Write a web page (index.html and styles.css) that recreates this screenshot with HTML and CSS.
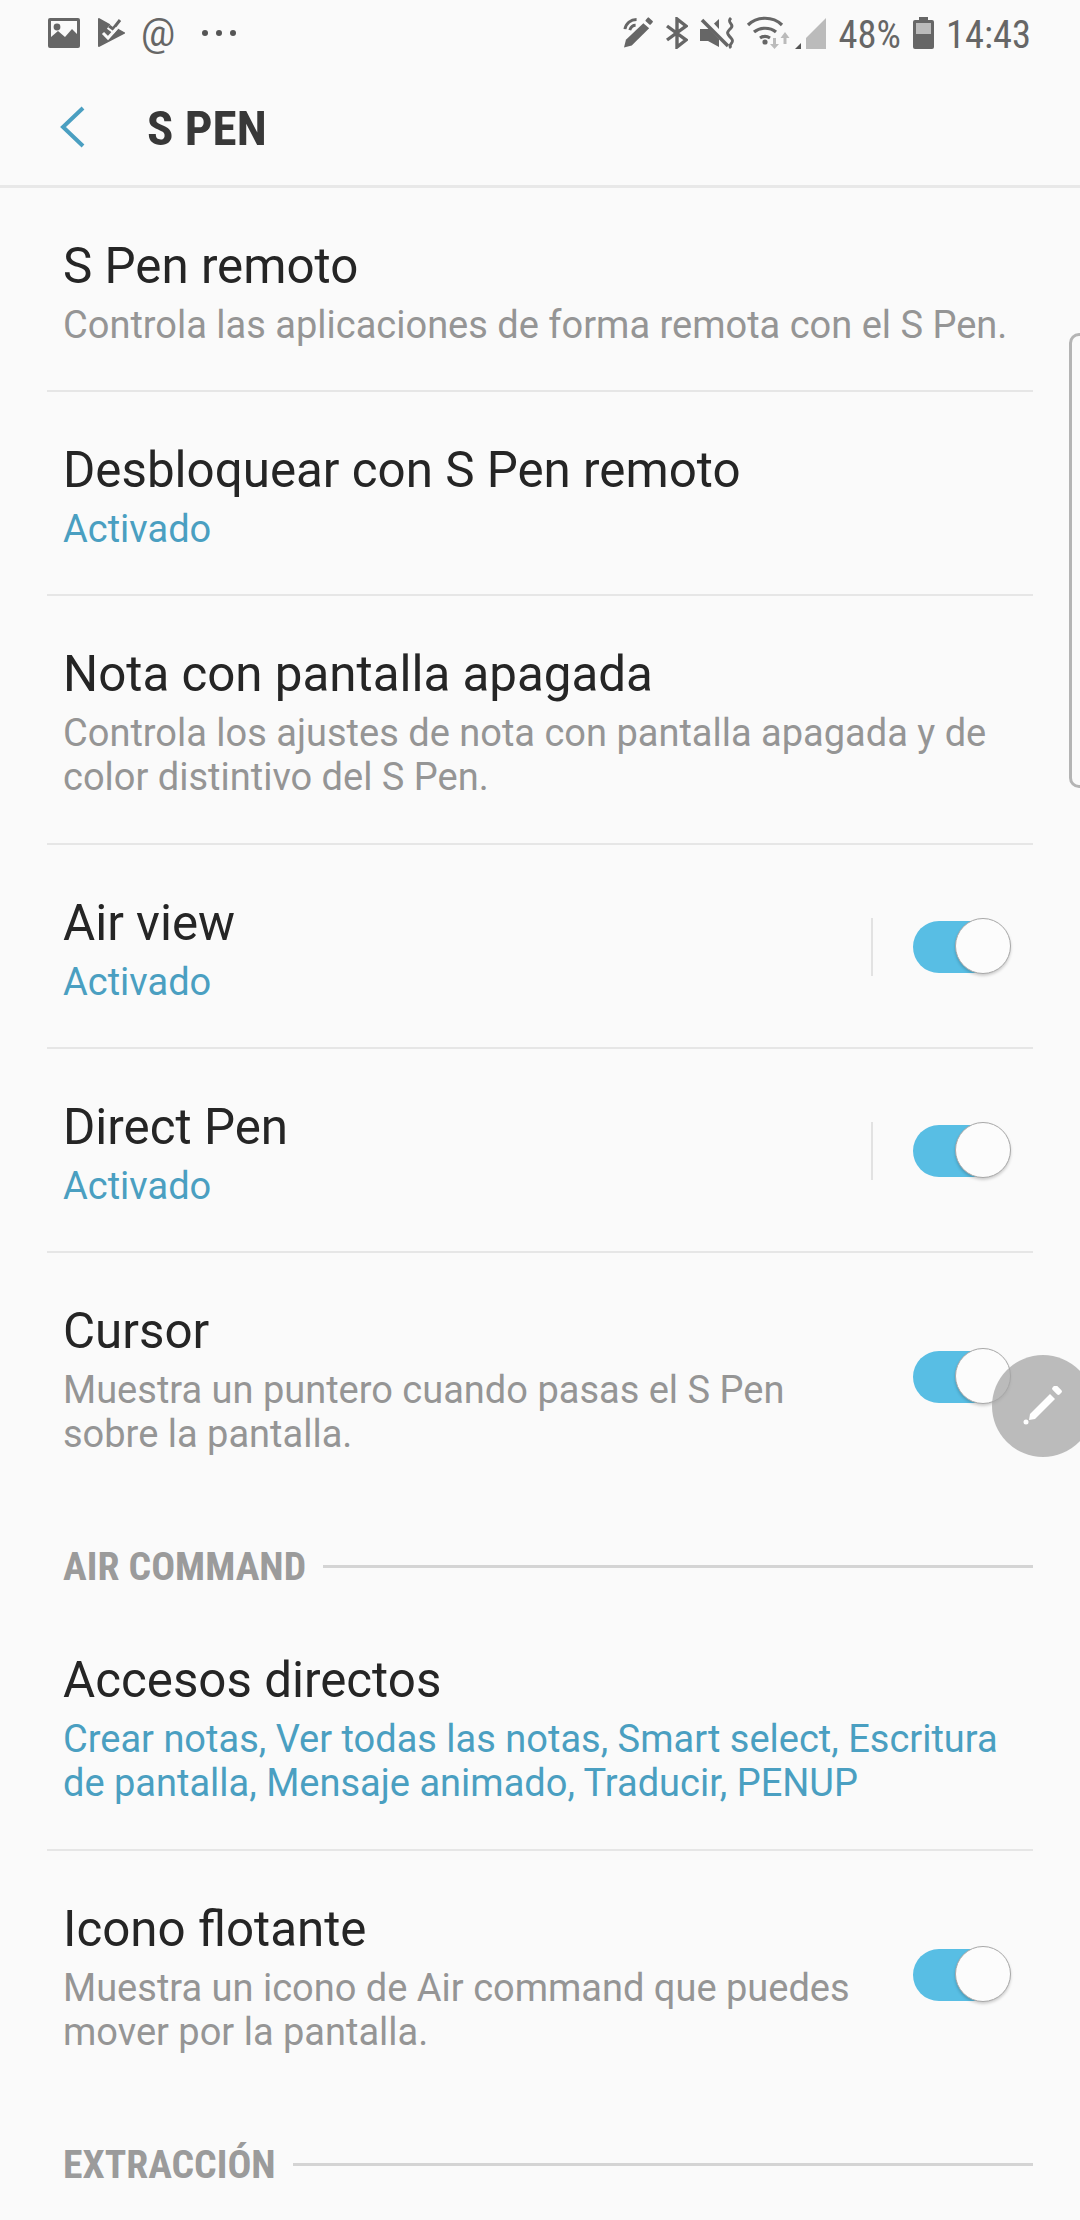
FILE: index.html
```html
<!DOCTYPE html>
<html lang="es">

<head>
  <meta charset="UTF-8" />
  <meta name="viewport" content="width=device-width, initial-scale=1.0" />
  <title>S Pen</title>
  <link rel="stylesheet" href="styles.css">
</head>

<body>
  <div class="statusbar">
    <div class="status-left">
      <svg class="ic-gallery" width="32" height="30" viewBox="0 0 32 30">
        <path fill="#666" fill-rule="evenodd" d="M2 0h28a2 2 0 0 1 2 2v26a2 2 0 0 1-2 2H2a2 2 0 0 1-2-2V2a2 2 0 0 1 2-2zM3 3v16l7-6 7 6 7-8 5 5V3z" />
        <circle cx="9" cy="9" r="3.4" fill="#666" />
      </svg>
      <svg class="ic-check" width="28" height="30" viewBox="0 0 28 30">
        <path fill="#666" d="M0 1a1 1 0 0 1 1-1l25 14a1 1 0 0 1 0 2L1 29a1 1 0 0 1-1-1z" />
        <path fill="none" stroke="#fafafa" stroke-width="7" d="M11 8l4 3 7-9" />
        <path fill="none" stroke="#666" stroke-width="3" d="M11 8l4 3 7-9" />
        <path fill="none" stroke="#fafafa" stroke-width="3" d="M5 15l5 5 9-10" />
      </svg>
      <span class="ic-at">@</span>
      <svg class="ic-dots" width="34" height="8" viewBox="0 0 34 8">
        <circle cx="3" cy="4" r="3" fill="#555" />
        <circle cx="17" cy="4" r="3" fill="#555" />
        <circle cx="31" cy="4" r="3" fill="#555" />
      </svg>
    </div>
    <div class="status-right">
      <svg width="31" height="32" viewBox="0 0 32 32">
        <path fill="#666" d="M1 31l2-8L21 6l6 5L9 29z" />
        <rect x="24" y="1" width="7" height="5" rx="1" transform="rotate(42 27 3)" fill="#666" />
        <path fill="none" stroke="#666" stroke-width="3" d="M2 12C3 6 8 2 14 2M7 13c1-3 3-5 6-5" />
      </svg>
      <svg width="22" height="32" viewBox="0 0 22 32">
        <path fill="none" stroke="#666" stroke-width="3.4" d="M1 9l19 14-9 7V2l9 7L1 23" />
      </svg>
      <svg width="34" height="32" viewBox="0 0 34 32">
        <path fill="#666" d="M0 12h8L19 2v28L8 24H0z" />
        <path stroke="#fafafa" stroke-width="7" d="M5 2l24 26" />
        <path stroke="#666" stroke-width="3.6" d="M2 3l26 26" />
        <path fill="none" stroke="#666" stroke-width="3" d="M31 1c-5 5 4 6 0 10s-5 5 0 10-4 6 0 10" />
      </svg>
      <svg class="ic-wifi" width="36" height="32" viewBox="0 0 36 32">
        <path fill="none" stroke="#666" stroke-width="3.2" d="M1 8C10-1 26-1 35 8M7 15c6-5 16-5 22 0M13 21c3-2 7-2 10 0" />
        <circle cx="18" cy="25" r="2.600" fill="#666" />
        <path fill="#bbb" d="M26 21h3v6h3l-4.500 5-4.500-5h3zM38 15l4.500 6h-3v6h-3v-6h-3z" />
      </svg>
      <svg width="31" height="32" viewBox="0 0 31 32">
        <path fill="#bbb" d="M11 21L31 1v31H11z" />
        <path fill="#555" d="M0 32l6-6v6z" />
      </svg>
      <span class="status-text pct">48%</span>
      <svg width="21" height="32" viewBox="0 0 21 32">
        <rect x="6" y="0" width="9" height="4" fill="#666" />
        <rect x="0" y="3" width="21" height="29" rx="2" fill="#666" />
        <rect x="3" y="6" width="15" height="11" fill="#bbb" />
      </svg>
      <span class="status-text">14:43</span>
    </div>
  </div>

  <header class="appbar">
    <svg class="back" width="26" height="42" viewBox="0 0 26 42">
      <path fill="none" stroke="#4a9fc1" stroke-width="4" d="M24 2L4 21l20 19" />
    </svg>
    <h1>S PEN</h1>
  </header>

  <main>
    <div class="row">
      <div class="row-text">
        <div class="title">S Pen remoto</div>
        <div class="sub">Controla las aplicaciones de forma remota con el S Pen.</div>
      </div>
    </div>
    <div class="row">
      <div class="row-text">
        <div class="title">Desbloquear con S Pen remoto</div>
        <div class="sub on">Activado</div>
      </div>
    </div>
    <div class="row two">
      <div class="row-text">
        <div class="title">Nota con pantalla apagada</div>
        <div class="sub">Controla los ajustes de nota con pantalla apagada y de<br>color distintivo del S Pen.</div>
      </div>
    </div>
    <div class="row">
      <div class="row-text">
        <div class="title">Air view</div>
        <div class="sub on">Activado</div>
      </div>
      <div class="vline"></div>
      <div class="toggle"></div>
    </div>
    <div class="row">
      <div class="row-text">
        <div class="title">Direct Pen</div>
        <div class="sub on">Activado</div>
      </div>
      <div class="vline"></div>
      <div class="toggle"></div>
    </div>
    <div class="row two last">
      <div class="row-text">
        <div class="title">Cursor</div>
        <div class="sub">Muestra un puntero cuando pasas el S Pen<br>sobre la pantalla.</div>
      </div>
      <div class="toggle"></div>
    </div>

    <div class="section">
      <span>AIR COMMAND</span>
      <div class="section-line"></div>
    </div>

    <div class="row two">
      <div class="row-text">
        <div class="title">Accesos directos</div>
        <div class="sub on">Crear notas, Ver todas las notas, Smart select, Escritura<br>de pantalla, Mensaje animado, Traducir, PENUP</div>
      </div>
    </div>
    <div class="row two last">
      <div class="row-text">
        <div class="title">Icono flotante</div>
        <div class="sub">Muestra un icono de Air command que puedes<br>mover por la pantalla.</div>
      </div>
      <div class="toggle"></div>
    </div>

    <div class="section">
      <span>EXTRACCIÓN</span>
      <div class="section-line"></div>
    </div>
  </main>

  <div class="edge-handle"></div>
  <div class="float-btn">
    <svg width="40" height="40" viewBox="0 0 40 40">
      <path fill="#fff" d="M7 28L27 8l5 5-20 20-6 1z" />
      <rect x="29" y="1" width="10" height="6" rx="2" transform="rotate(45 34 4)" fill="#fff" />
      <circle cx="3" cy="36" r="2.500" fill="#fff" />
    </svg>
  </div>
</body>

</html>
```

FILE: styles.css
```css
html,
body {
  margin: 0;
  padding: 0;
}

body {
  width: 1080px;
  height: 2220px;
  overflow: hidden;
  position: relative;
  background-color: #fafafa;
  font-family: Roboto, sans-serif;
  color: #252525;
}

/* status bar */
.statusbar {
  height: 66px;
  display: flex;
  justify-content: space-between;
  align-items: center;
  padding: 0 53px 0 48px;
}

.status-left,
.status-right {
  display: flex;
  align-items: center;
}

.ic-check {
  margin-left: 18px;
}

.ic-at {
  margin-left: 15px;
  width: 38px;
  font-size: 38px;
  line-height: 40px;
  color: #666;
}

.ic-dots {
  margin-left: 23px;
}

.status-right svg {
  margin-right: 12.4px;
}

.status-right .ic-wifi {
  overflow: visible;
}

.status-text {
  display: inline-block;
  margin-top: 3px;
  font-size: 38.500px;
  line-height: 40px;
  font-stretch: 75%;
  color: #666;
  width: 81px;
}

.status-text.pct {
  width: 74px;
}

/* app bar */
.appbar {
  height: 122px;
  box-sizing: border-box;
  border-bottom: 3px solid #e8e8e8;
  display: flex;
  align-items: center;
  padding-left: 59px;
  padding-top: 6px;
}

.back {
  margin-top: -3px;
}

.appbar h1 {
  margin: 0 0 0 62px;
  font-size: 49px;
  font-weight: 700;
  font-stretch: 75%;
  color: #383838;
}

/* rows */
.row {
  margin: 0 47px;
  padding: 52px 17px 43px 16px;
  display: flex;
  align-items: center;
  border-bottom: 2px solid #e6e6e6;
  box-sizing: border-box;
}

.row.two {
  padding-bottom: 44px;
}

.row.last {
  border-bottom: 2px solid transparent;
}

.row-text {
  flex: 1;
}

.title {
  font-size: 49.300px;
  line-height: 52px;
  margin-bottom: 11px;
  white-space: nowrap;
}

.sub {
  font-size: 38px;
  line-height: 44px;
  color: #959595;
  white-space: nowrap;
}

.sub.on {
  color: #4a9fc1;
}

.vline {
  width: 2px;
  height: 58px;
  background-color: #e2e2e2;
  margin: -7px 40px 0 0;
}

.toggle {
  position: relative;
  width: 88px;
  height: 52px;
  border-radius: 26px;
  background-color: #58bee4;
  margin: -7px 15px 0 0;
}

.toggle::after {
  content: "";
  position: absolute;
  top: -3px;
  right: -10px;
  width: 54px;
  height: 54px;
  border-radius: 50%;
  background-color: #fcfcfc;
  border: 1px solid #a8a8a8;
  box-shadow: 0 2px 3px rgba(0, 0, 0, 0.18);
}

/* section headers */
.section {
  height: 100px;
  margin: 0 47px 0 63px;
  padding-top: 41px;
  box-sizing: border-box;
  display: flex;
  align-items: flex-start;
  gap: 17px;
  font-size: 39.700px;
  line-height: 48px;
  font-weight: 700;
  font-stretch: 75%;
  color: #9b9b9b;
}

.section-line {
  flex: 1;
  height: 3px;
  background-color: #d4d4d4;
  margin-top: 22px;
}

/* overlays */
.edge-handle {
  position: absolute;
  left: 1069px;
  top: 333px;
  width: 20px;
  height: 455px;
  box-sizing: border-box;
  border: 3px solid #b4b4b4;
  border-radius: 14px;
}

.float-btn {
  position: absolute;
  left: 992px;
  top: 1355px;
  width: 102px;
  height: 102px;
  border-radius: 50%;
  background-color: rgba(165, 165, 165, 0.75);
  display: flex;
  align-items: center;
  justify-content: center;
}
```
